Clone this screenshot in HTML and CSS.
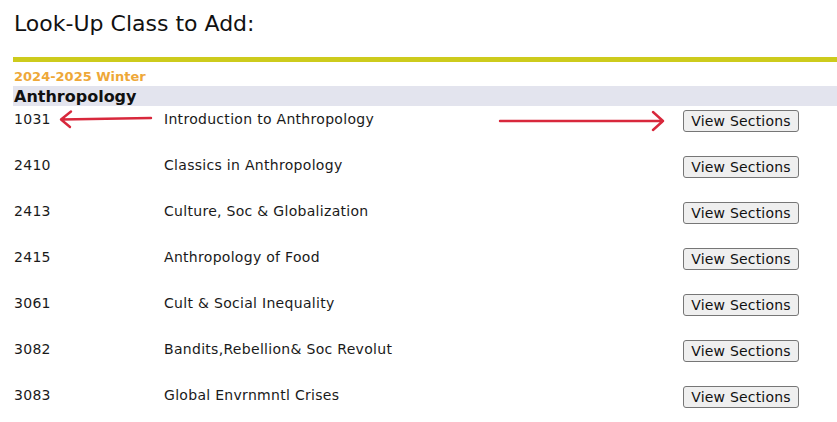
FILE: index.html
```html
<!DOCTYPE html>
<html>
<head>
<meta charset="utf-8">
<link rel="stylesheet" href="styles.css">
</head>
<body>
<div class="page">
  <h1 class="title">Look-Up Class to Add:</h1>
  <div class="rule"></div>
  <div class="term">2024-2025 Winter</div>
  <div class="subject">Anthropology</div>
  <div class="rows">
    <div class="row">
      <span class="num">1031</span>
      <span class="name">Introduction to Anthropology</span>
      <button class="btn">View Sections</button>
    </div>
    <div class="row">
      <span class="num">2410</span>
      <span class="name">Classics in Anthropology</span>
      <button class="btn">View Sections</button>
    </div>
    <div class="row">
      <span class="num">2413</span>
      <span class="name">Culture, Soc &amp; Globalization</span>
      <button class="btn">View Sections</button>
    </div>
    <div class="row">
      <span class="num">2415</span>
      <span class="name">Anthropology of Food</span>
      <button class="btn">View Sections</button>
    </div>
    <div class="row">
      <span class="num">3061</span>
      <span class="name">Cult &amp; Social Inequality</span>
      <button class="btn">View Sections</button>
    </div>
    <div class="row">
      <span class="num">3082</span>
      <span class="name">Bandits,Rebellion&amp; Soc Revolut</span>
      <button class="btn">View Sections</button>
    </div>
    <div class="row">
      <span class="num">3083</span>
      <span class="name">Global Envrnmntl Crises</span>
      <button class="btn">View Sections</button>
    </div>
  </div>
</div>
<svg class="arrow arrow-left" width="100" height="24" viewBox="0 0 100 24">
  <path d="M93 11 L3 12.5 M13 4.5 L3 12.5 L12 20" fill="none" stroke="#d8283c" stroke-width="2.4" stroke-linecap="round" stroke-linejoin="round"/>
</svg>
<svg class="arrow arrow-right" width="170" height="24" viewBox="0 0 170 24">
  <path d="M2 12 L165 12 M155 3 L165 12 L155 21" fill="none" stroke="#d8283c" stroke-width="2.4" stroke-linecap="round" stroke-linejoin="round"/>
</svg>
</body>
</html>
```

FILE: styles.css
```css
html, body {
  margin: 0;
  padding: 0;
  background: #ffffff;
}

body {
  font-family: "DejaVu Sans", Verdana, sans-serif;
  color: #1a1a1a;
  overflow: hidden;
}

.page {
  margin-left: 13px;
  position: relative;
}

.title {
  margin: 0;
  padding: 11px 0 0 1px;
  font-size: 22px;
  font-weight: normal;
  line-height: 26px;
  color: #111;
}

.rule {
  margin-top: 20px;
  height: 5px;
  background: #cdcb1c;
}

.term {
  margin-top: 6px;
  padding-left: 1px;
  font-size: 13px;
  font-weight: bold;
  line-height: 18px;
  color: #eea838;
}

.subject {
  height: 20px;
  padding-left: 1px;
  background: #e3e4ee;
  font-size: 16px;
  font-weight: bold;
  line-height: 21px;
  color: #111;
}

.rows {
  display: flex;
  flex-direction: column;
}

.row {
  display: flex;
  align-items: flex-start;
  height: 46px;
  font-size: 14px;
  letter-spacing: 0.3px;
  line-height: 16px;
}

.num {
  width: 150px;
  padding-left: 1px;
  padding-top: 5px;
}

.name {
  width: 519px;
  padding-top: 5px;
}

.btn {
  margin-top: 4px;
  height: 22px;
  width: 116px;
  padding: 0;
  font-family: "DejaVu Sans", Verdana, sans-serif;
  font-size: 14px;
  letter-spacing: 0.2px;
  color: #111;
  background: #efefef;
  border: 1px solid #767676;
  border-radius: 3px;
}

.arrow {
  position: absolute;
}

.arrow-left {
  left: 58px;
  top: 107px;
}

.arrow-right {
  left: 498px;
  top: 109px;
}
```
